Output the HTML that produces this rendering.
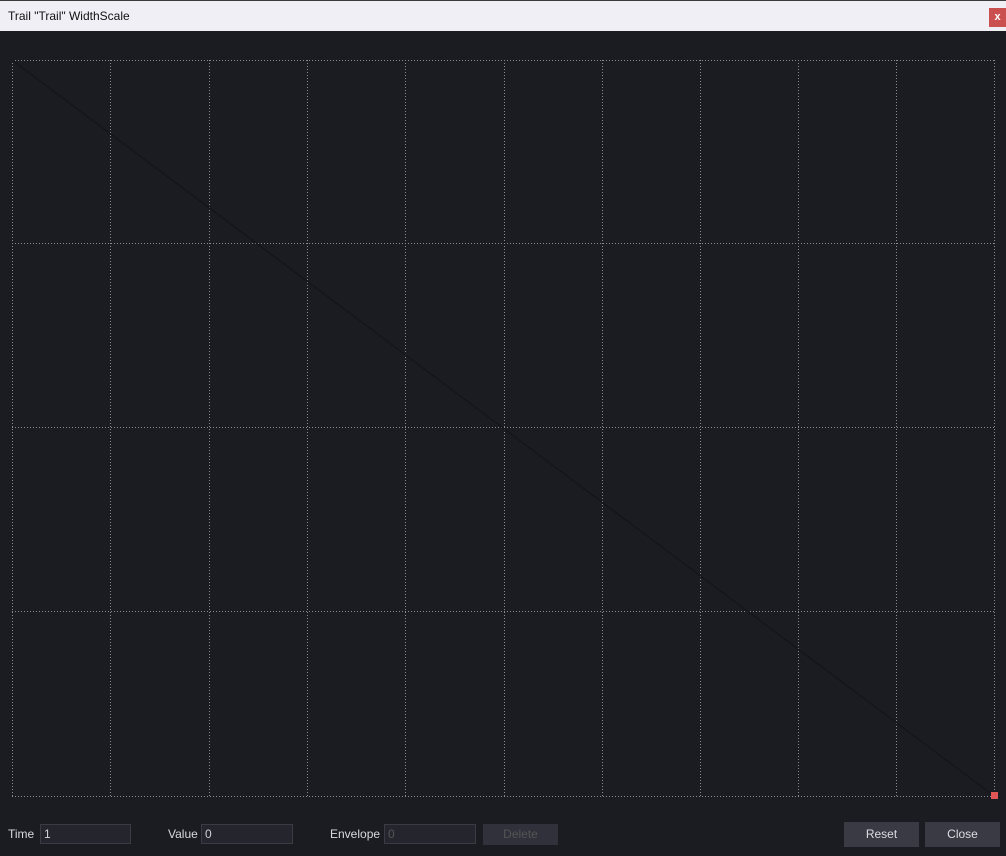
<!DOCTYPE html>
<html><head><style>
*{margin:0;padding:0;box-sizing:border-box}
body{width:1006px;height:856px;background:#1b1c21;position:relative;overflow:hidden;font-family:"Liberation Sans",sans-serif;font-size:12px;color:#d8d8de}
.title{position:absolute;left:0;top:0;width:1006px;height:31px;background:#f0eff6;border-top:1px solid #3a3a3a}
.title span{position:absolute;left:8px;top:8px;color:#111;font-size:12px}
.x{position:absolute;left:989px;top:7px;width:17px;height:19px;background:#c9504f;color:#fff;font-size:11px;font-weight:bold;text-align:center;line-height:18px}
.lbl{position:absolute;top:827px}
.in{position:absolute;top:824px;height:20px;background:#25262d;border:1px solid #3b3c43;padding-left:3px;line-height:18px;color:#d0d0d8}
.btn{position:absolute;top:822px;height:25px;background:#393a44;text-align:center;line-height:25px;color:#dcdce2}
</style></head><body>
<div class="title"><span>Trail "Trail" WidthScale</span><div class="x">x</div></div>
<svg width="1006" height="856" style="position:absolute;left:0;top:0">
<g stroke="#8a8b90" stroke-width="1" stroke-dasharray="1 2" fill="none">
<line x1="12" y1="60.5" x2="994" y2="60.5"/>
<line x1="12" y1="243.5" x2="994" y2="243.5"/>
<line x1="12" y1="427.5" x2="994" y2="427.5"/>
<line x1="12" y1="611.5" x2="994" y2="611.5"/>
<line x1="12" y1="796.5" x2="994" y2="796.5"/>
<line x1="12.5" y1="60" x2="12.5" y2="796"/>
<line x1="110.5" y1="60" x2="110.5" y2="796"/>
<line x1="209.5" y1="60" x2="209.5" y2="796"/>
<line x1="307.5" y1="60" x2="307.5" y2="796"/>
<line x1="405.5" y1="60" x2="405.5" y2="796"/>
<line x1="504.5" y1="60" x2="504.5" y2="796"/>
<line x1="602.5" y1="60" x2="602.5" y2="796"/>
<line x1="700.5" y1="60" x2="700.5" y2="796"/>
<line x1="798.5" y1="60" x2="798.5" y2="796"/>
<line x1="896.5" y1="60" x2="896.5" y2="796"/>
<line x1="994.5" y1="60" x2="994.5" y2="796"/>
</g>
<line x1="12" y1="60" x2="994" y2="796" stroke="#121317" stroke-width="1"/>
<rect x="991" y="792" width="7" height="7" fill="#e05555"/>
</svg>
<div class="lbl" style="left:8px">Time</div>
<div class="in" style="left:40px;width:91px">1</div>
<div class="lbl" style="left:168px">Value</div>
<div class="in" style="left:201px;width:92px">0</div>
<div class="lbl" style="left:330px">Envelope</div>
<div class="in" style="left:384px;width:92px;color:#555">0</div>
<div class="btn" style="left:483px;width:75px;top:824px;height:21px;line-height:21px;color:#555;background:#30313a">Delete</div>
<div class="btn" style="left:844px;width:75px">Reset</div>
<div class="btn" style="left:925px;width:75px">Close</div>
</body></html>
